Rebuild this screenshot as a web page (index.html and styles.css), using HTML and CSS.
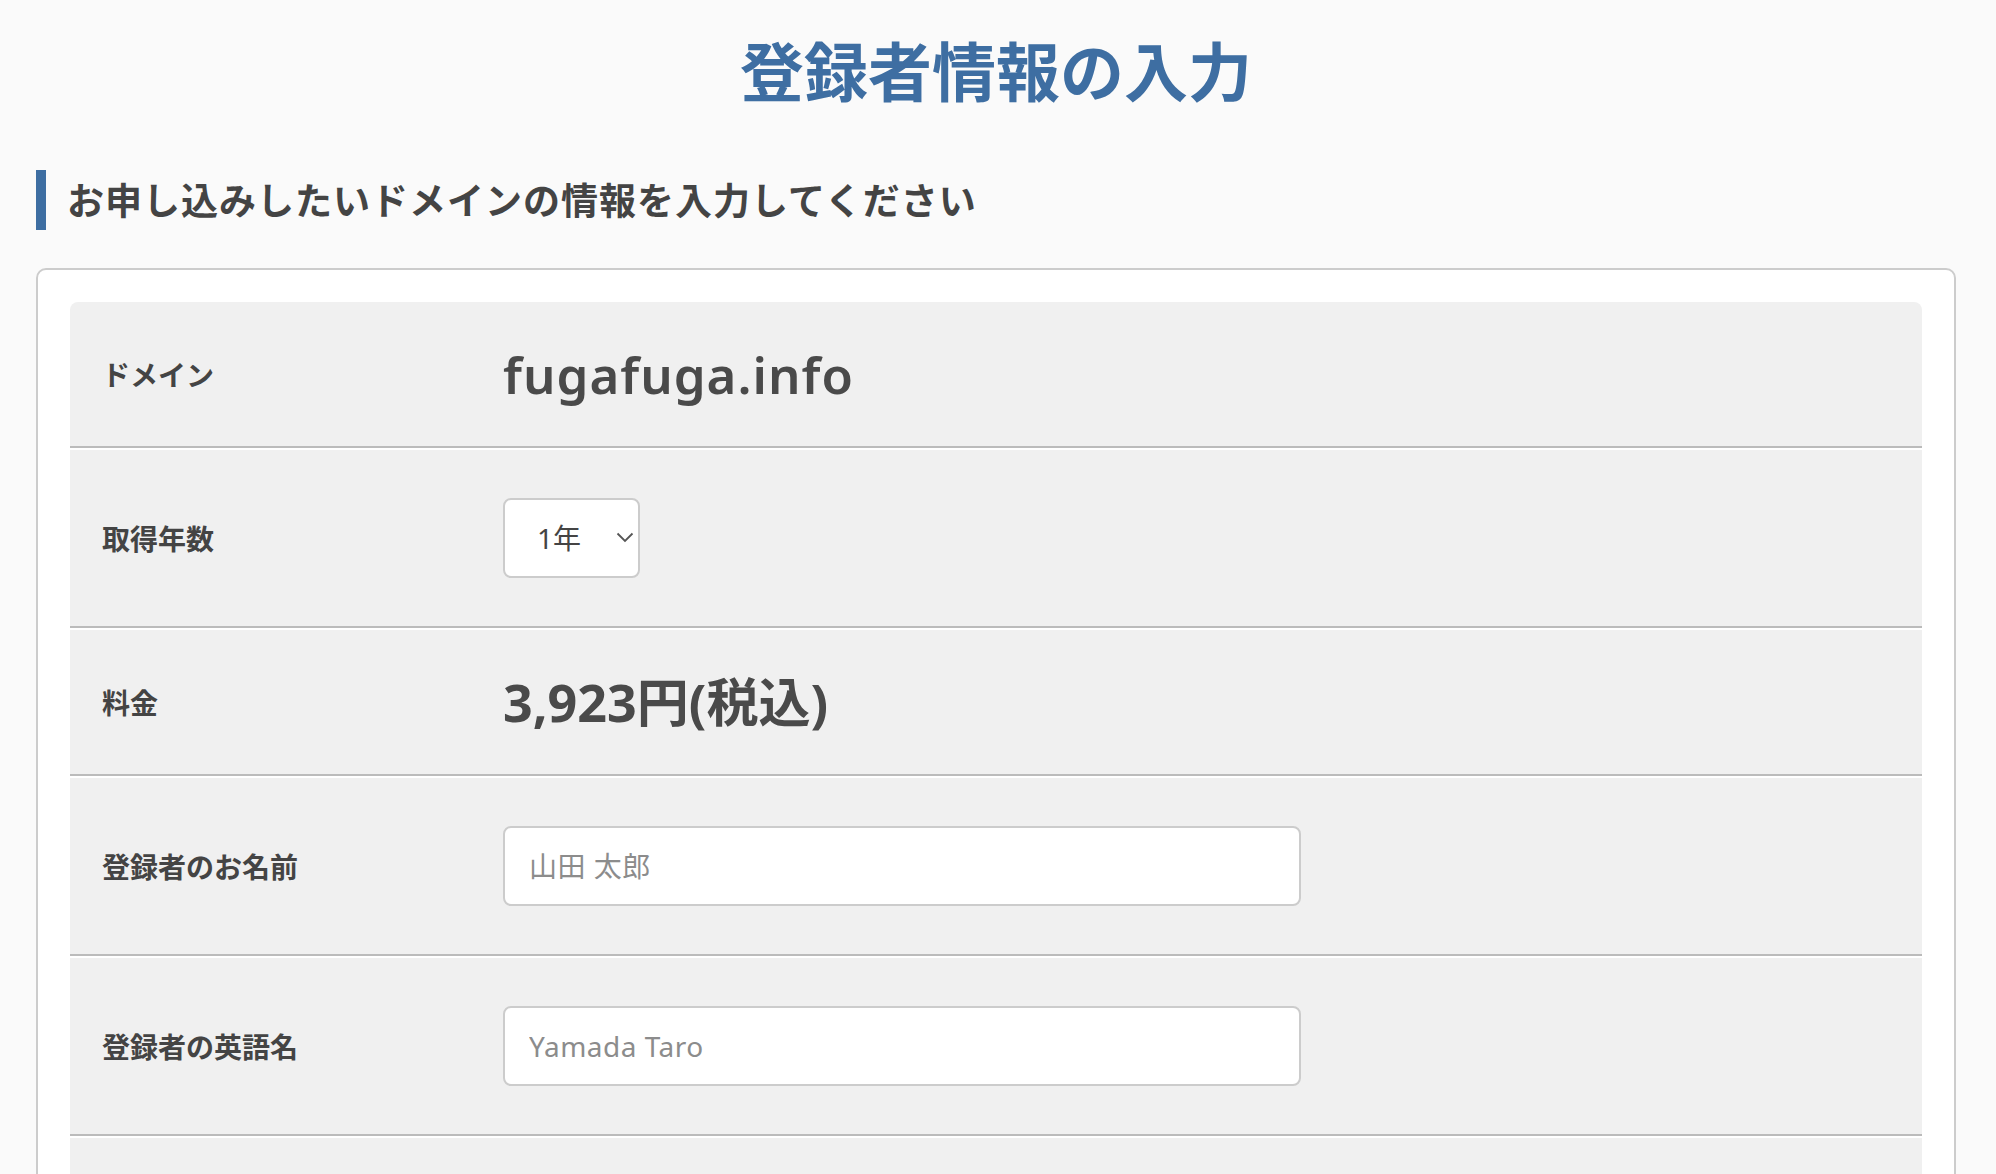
FILE: index.html
```html
<!DOCTYPE html>
<html lang="ja">
<head>
<meta charset="utf-8">
<title>登録者情報の入力</title>
<link rel="stylesheet" href="styles.css">
</head>
<body>
<div class="page">
  <h1 class="title">登録者情報の入力</h1>
  <h2 class="section-title">お申し込みしたいドメインの情報を入力してください</h2>
  <div class="card">
    <div class="form-table">
      <div class="row">
        <div class="label">ドメイン</div>
        <div class="value domain">fugafuga.info</div>
      </div>
      <div class="row">
        <div class="label">取得年数</div>
        <div class="value">
          <div class="select-wrap">
            <select class="select">
              <option>1年</option>
              <option>2年</option>
              <option>3年</option>
            </select>
            <svg class="chevron" width="18" height="11" viewBox="0 0 18 11"><path d="M1.5 1.5 L9 9 L16.5 1.5" fill="none" stroke="#555" stroke-width="1.8"/></svg>
          </div>
        </div>
      </div>
      <div class="row">
        <div class="label">料金</div>
        <div class="value price">3,923円(税込)</div>
      </div>
      <div class="row">
        <div class="label">登録者のお名前</div>
        <div class="value"><input class="text-input" type="text" placeholder="山田 太郎"></div>
      </div>
      <div class="row">
        <div class="label">登録者の英語名</div>
        <div class="value"><input class="text-input" type="text" placeholder="Yamada Taro"></div>
      </div>
      <div class="row">
        <div class="label">メールアドレス</div>
        <div class="value"><input class="text-input" type="text" placeholder="example@fugafuga.info"></div>
      </div>
    </div>
  </div>
</div>
</body>
</html>
```

FILE: styles.css
```css
html, body {
  margin: 0;
  padding: 0;
}
body {
  background: #fafafa;
  color: #444;
  font-family: "Noto Sans", "Noto Sans CJK JP", sans-serif;
}
.page {
  padding: 36px 40px 0 36px;
}
.title {
  margin: 0;
  font-size: 64px;
  line-height: 64px;
  font-weight: 700;
  text-align: center;
  color: #3e6ea2;
  font-family: "Noto Sans CJK JP", sans-serif;
}
.section-title {
  margin: 70px 0 38px;
  border-left: 10px solid #3e6ea2;
  padding-left: 21px;
  height: 60px;
  font-size: 37px;
  line-height: 58px;
  letter-spacing: 1px;
  font-weight: 700;
  color: #444;
  font-family: "Noto Sans CJK JP", sans-serif;
}
.card {
  background: #fff;
  border: 2px solid #ccc;
  border-radius: 10px;
  padding: 32px;
}
.form-table {
  background: #f0f0f0;
  border-radius: 8px 8px 0 0;
}
.row {
  display: flex;
  align-items: center;
  padding: 48px 32px;
  border-bottom: 2px solid #bbb;
}
.row + .row {
  border-top: 2px solid #fff;
}
.label {
  flex: 0 0 401px;
  font-size: 28px;
  font-weight: 700;
  color: #444;
  font-family: "Noto Sans CJK JP", sans-serif;
}
.value {
  flex: 1;
  display: flex;
  align-items: center;
}
.domain {
  font-size: 51px;
  line-height: 48px;
  font-weight: 600;
  letter-spacing: 1px;
  color: #4a4a4a;
}
.price {
  font-size: 52px;
  line-height: 48px;
  font-weight: 700;
  color: #4a4a4a;
}
.select-wrap {
  position: relative;
  width: 137px;
  height: 80px;
}
.select {
  appearance: none;
  -webkit-appearance: none;
  box-sizing: border-box;
  width: 137px;
  height: 80px;
  border: 2px solid #ccc;
  border-radius: 8px;
  background: #fff;
  padding: 0 0 0 32px;
  font-size: 28px;
  color: #444;
  font-family: "Noto Sans", "Noto Sans CJK JP", sans-serif;
}
.chevron {
  position: absolute;
  right: 6px;
  top: 34px;
  pointer-events: none;
}
.text-input {
  box-sizing: border-box;
  width: 798px;
  height: 80px;
  border: 2px solid #ccc;
  border-radius: 8px;
  background: #fff;
  padding: 0 24px;
  font-size: 28px;
  letter-spacing: 0.5px;
  color: #444;
  font-family: "Noto Sans", "Noto Sans CJK JP", sans-serif;
}
.text-input::placeholder {
  color: #8c8c8c;
}
```
